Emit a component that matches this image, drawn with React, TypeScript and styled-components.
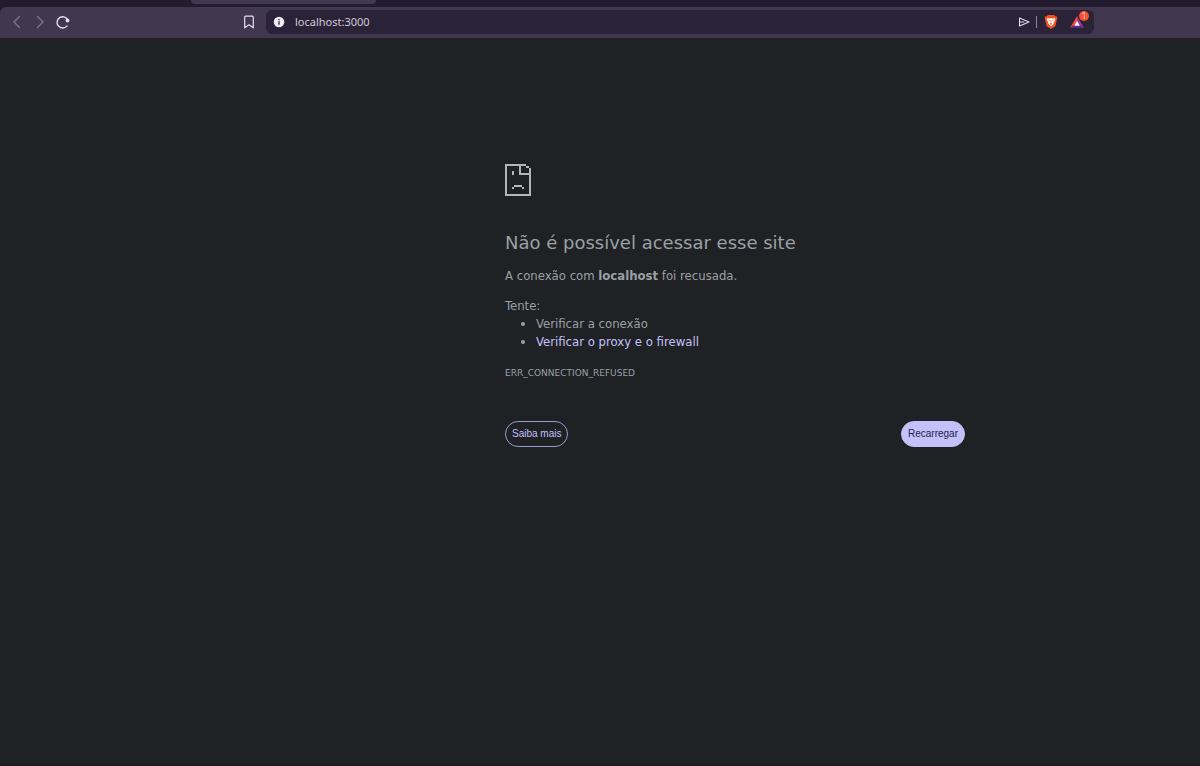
import React from "react";
import styled, { createGlobalStyle } from "styled-components";

const GlobalStyle = createGlobalStyle`
  *, *::before, *::after { box-sizing: border-box; }
  body {
    margin: 0;
    background: #202124;
    color: #9aa0a6;
    font-family: "DejaVu Sans Condensed", "DejaVu Sans", sans-serif;
  }
`;

const Shell = styled.div`
  display: flex;
  flex-direction: column;
  min-height: 100vh;
  border-bottom: 2px solid #1e1a20;
  overflow: hidden;
`;

const TabStrip = styled.div`
  display: flex;
  height: 7px;
  padding-left: 191px;
`;

const ActiveTab = styled.div`
  width: 185px;
  height: 4px;
  border-radius: 0 0 6px 6px;
  background: #41394f;
`;

const Toolbar = styled.header`
  display: flex;
  align-items: center;
  height: 31px;
  padding: 0 106px 2px 6px;
  border-radius: 6px 0 0 0;
  background: #41384f;
`;

const Chrome = styled.div`
  background: #231c2e;
`;

const NavGroup = styled.nav`
  display: flex;
  width: 232px;
  gap: 1px;
`;

const IconButton = styled.button<{ $dim?: boolean }>`
  display: inline-flex;
  align-items: center;
  justify-content: center;
  width: 22px;
  height: 22px;
  padding: 0;
  border: 0;
  background: transparent;
  color: ${(p) => (p.$dim ? "#7d758b" : "#e4deec")};
`;

const BookmarkSlot = styled.div`
  display: flex;
  padding-right: 6px;
`;

const AddressBar = styled.div`
  display: flex;
  flex: 1;
  align-items: center;
  min-width: 0;
  height: 24px;
  padding: 0 2px;
  border-radius: 6px;
  background: #2a2236;
`;

const AddressInput = styled.input`
  flex: 1;
  min-width: 0;
  height: 20px;
  padding: 0 5px;
  border: 0;
  outline: 0;
  background: transparent;
  color: #d0cad8;
  font: 11px/20px "Noto Sans", sans-serif;
`;

const Divider = styled.span`
  width: 1px;
  height: 12px;
  margin: 0 3px 0 1px;
  background: #8c8498;
`;

const RewardsButton = styled(IconButton)`
  position: relative;
  width: 30px;
`;

const Badge = styled.span`
  position: absolute;
  top: 0;
  right: 3px;
  width: 10px;
  height: 10px;
  border-radius: 5px;
  background: #f9502f;
  color: #ffd9cf;
  font: 8px/10px "Noto Sans", sans-serif;
  text-align: center;
`;

const ErrorPage = styled.main`
  max-width: 460px;
  width: 100%;
  margin: 126px 0 0 505px;
  font-size: 13px;
  line-height: 18px;
`;

const PageIcon = styled.svg`
  display: block;
  width: 26px;
  height: 32px;
`;

const Title = styled.h1`
  margin: 36px 0 13px;
  font-family: "DejaVu Sans", sans-serif;
  font-size: 18px;
  font-weight: 500;
  line-height: 22px;
`;

const Paragraph = styled.p`
  margin: 0 0 12px;
`;

const Hint = styled.p`
  margin: 0;
`;

const Suggestions = styled.ul`
  margin: 0 0 13px;
  padding-left: 31px;
`;

const HelpLink = styled.a`
  color: #c3c0fa;
  text-decoration: none;
`;

const ErrorCode = styled.div`
  font-family: "DejaVu Sans", sans-serif;
  font-size: 9px;
`;

const Actions = styled.div`
  display: flex;
  justify-content: space-between;
  margin-top: 39px;
`;

const ActionButton = styled.button<{ $primary?: boolean }>`
  height: 26px;
  padding: 0 6px;
  border: 1px solid ${(p) => (p.$primary ? "#c3c0fa" : "#9c99cc")};
  border-radius: 13px;
  background: ${(p) => (p.$primary ? "#c3c0fa" : "transparent")};
  color: ${(p) => (p.$primary ? "#25204a" : "#c3c0fa")};
  font: 10px/16px "Liberation Sans", Arial, sans-serif;
`;

const strokeProps = {
  fill: "none",
  stroke: "currentColor",
  strokeLinecap: "round" as const,
  strokeLinejoin: "round" as const,
};

export default function App() {
  return (
    <>
      <GlobalStyle />
      <Shell>
        <Chrome>
          <TabStrip>
            <ActiveTab />
          </TabStrip>
          <Toolbar>
            <NavGroup>
              <IconButton $dim aria-label="Voltar">
                <svg width="14" height="14" viewBox="0 0 14 14" {...strokeProps} strokeWidth="1.3">
                  <path d="M9.5 1.5 4 7l5.5 5.5" />
                </svg>
              </IconButton>
              <IconButton $dim aria-label="Avançar">
                <svg width="14" height="14" viewBox="0 0 14 14" {...strokeProps} strokeWidth="1.3">
                  <path d="M4.5 1.5 10 7l-5.5 5.5" />
                </svg>
              </IconButton>
              <IconButton aria-label="Recarregar">
                <svg width="14" height="14" viewBox="0 0 14 14" {...strokeProps} strokeWidth="1.4">
                  <path d="M10.9 11.1A5.600 5.600 0 1 1 12 5.500" />
                  <circle cx="11.5" cy="5.5" r="1.9" fill="currentColor" stroke="none" />
                </svg>
              </IconButton>
            </NavGroup>
            <BookmarkSlot>
              <IconButton aria-label="Favoritos">
                <svg width="14" height="14" viewBox="0 0 14 14" {...strokeProps} strokeWidth="1.2">
                  <path d="M3.700 1.200h6.600q1 0 1 1v10.600L7 9.800l-4.300 3V2.200q0-1 1-1z" />
                </svg>
              </IconButton>
            </BookmarkSlot>
            <AddressBar>
              <IconButton aria-label="Informações do site">
                <svg width="12" height="12" viewBox="0 0 12 12">
                  <circle cx="6" cy="6" r="5.3" fill="#efeaf6" />
                  <path d="M6 5.300v3.400M6 3v1.200" stroke="#2a2236" strokeWidth="1.3" />
                </svg>
              </IconButton>
              <AddressInput aria-label="Endereço" defaultValue="localhost:3000" />
              <IconButton aria-label="Compartilhar">
                <svg width="12" height="12" viewBox="0 0 12 12" {...strokeProps} strokeWidth="1.1">
                  <path d="M1.500 2 11 6 1.500 10zM1.500 6H6" />
                </svg>
              </IconButton>
              <Divider />
              <IconButton aria-label="Brave Shields">
                <svg width="14" height="16" viewBox="0 0 14 16">
                  <path d="M4 1h6l1.300 1.300 1.300-.1.800 2-.6 1.500-1.100 5.600Q11.300 12.700 7 15 2.700 12.700 2.300 11.300L1.200 5.700.6 4.200l.8-2 1.300.1z" fill="#f4511e" />
                  <path d="m3.300 4.300 2.200.2L7 4.200l1.500.3 2.200-.2.700 1.700-1.900 2.600.3 1.200L7 12.200 4.200 9.800l.3-1.200L2.600 6z" fill="#fff" />
                  <path d="m4 5.800 2 .6-.6.800zM10 5.800l-2 .6.600.8zM5.600 9.700 7 9l1.400.7L7 10.700zM6.700 6h.6v2.500h-.6z" fill="#f4511e" />
                </svg>
              </IconButton>
              <RewardsButton aria-label="Brave Rewards">
                <svg width="14" height="14" viewBox="0 0 14 14">
                  <path d="M7 1 0 13l7-4.500z" fill="#f04a3a" />
                  <path d="m7 1 7 12-7-4.500z" fill="#a43a9b" />
                  <path d="M0 13h14l-4.200-2.500H4.200z" fill="#5b2d91" />
                  <path d="m7 6 2.800 4.800H4.200z" fill="#fff" />
                </svg>
                <Badge>1</Badge>
              </RewardsButton>
            </AddressBar>
          </Toolbar>
        </Chrome>
        <ErrorPage>
          <PageIcon viewBox="0 0 26 32" fill="#b4b6b9" shapeRendering="crispEdges" aria-hidden="true">
            <path d="M0 0h21v2H2v28h22V4h2v28H0z" />
            <path d="M14 2h2v7h8v2H14zM21 2h3v2h-3zM7 7h2v4H7zM9 21h8v2H9zM7 23h2v2H7zM17 23h2v2h-2z" />
          </PageIcon>
          <Title>Não é possível acessar esse site</Title>
          <Paragraph>
            A conexão com <strong>localhost</strong> foi recusada.
          </Paragraph>
          <Hint>Tente:</Hint>
          <Suggestions>
            <li>Verificar a conexão</li>
            <li>
              <HelpLink href="#proxy">Verificar o proxy e o firewall</HelpLink>
            </li>
          </Suggestions>
          <ErrorCode>ERR_CONNECTION_REFUSED</ErrorCode>
          <Actions>
            <ActionButton>Saiba mais</ActionButton>
            <ActionButton $primary>Recarregar</ActionButton>
          </Actions>
        </ErrorPage>
      </Shell>
    </>
  );
}
